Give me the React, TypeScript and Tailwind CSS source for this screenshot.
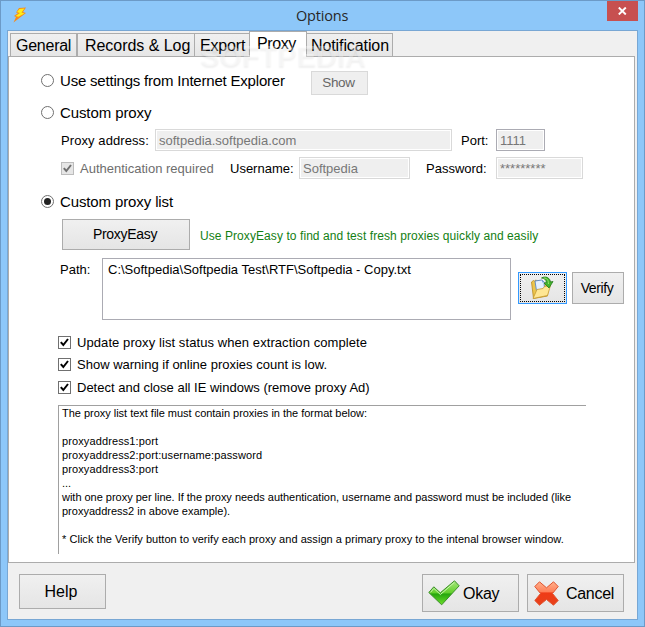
import type { ReactNode } from "react";

function Radio({ checked = false }: { checked?: boolean }) {
  return (
    <span className="flex size-[13px] shrink-0 items-center justify-center rounded-full border border-[#707070] bg-white">
      {checked && <span className="size-[7px] rounded-full bg-[#212121]" />}
    </span>
  );
}

function Check({ disabled = false }: { disabled?: boolean }) {
  return (
    <span
      className={
        "flex size-[13px] shrink-0 items-center justify-center border " +
        (disabled ? "border-[#bcbcbc] bg-[#e6e6e6] text-[#707070]" : "border-[#707070] bg-white text-black")
      }
    >
      <svg width="11" height="11" viewBox="0 0 11 11" fill="none" stroke="currentColor" strokeWidth="2">
        <path d="M1.8 5.2 4.3 8 9 2" />
      </svg>
    </span>
  );
}

function Field({ className, children }: { className: string; children: ReactNode }) {
  return (
    <div className={"h-[22px] shrink-0 border bg-[#efefef] pl-[3px] text-[13px] leading-[22px] whitespace-nowrap text-[#777] shadow-[inset_0_0_0_1px_#fff] " + className}>
      {children}
    </div>
  );
}

const button = "flex shrink-0 items-center border border-[#acacac] bg-linear-to-b from-[#f0f0f0] to-[#e5e5e5] whitespace-nowrap ";
const tab = "h-[23px] shrink-0 border border-b-0 border-[#acacac] bg-linear-to-b from-[#f0f0f0] to-[#e6e6e6] leading-[23px] ";

function Bolt() {
  return (
    <svg width="16" height="16" viewBox="0 0 16 16">
      <path d="M7 1 14 .5 11 5l3 1-6 4.500-6.500 5L4 10 2 9l4-3-2-.5Z" fill="#f58b1c" />
      <path d="M7.500 2 12.500 1.500 9.500 5.500l3 1-6 3.200L3.500 9l4.500-3L5 5Z" fill="#ffee16" />
    </svg>
  );
}

function Folder() {
  return (
    <svg width="24" height="24" viewBox="0 0 24 24">
      <path d="m1.500 6 2-1.500 2 1V4l13 5-1 11-14 2.500Z" fill="#ecc54c" stroke="#b88a20" strokeWidth=".8" />
      <path d="m5 5 7-1 2 2 .5 7-8 2Z" fill="#e4f0ff" stroke="#668fc4" />
      <path d="m12 4 2 2-2 .5Z" fill="#78a4dc" />
      <path d="m3 22.500 4-9 6-1 1.500-2 6-1-3 10Z" fill="#ffe794" stroke="#c69a2f" strokeWidth=".8" />
      <path d="M11.500 2C16-.5 20 2 20.500 6l2.500-.5-4 6.500-5-5 2.500-.5C16 3.500 14.500 2.200 11.500 2Z" fill="#42b52d" stroke="#23791b" strokeWidth=".8" />
      <path d="M14 2c3 0 4.500 2 4.500 6" fill="none" stroke="#95e36b" />
    </svg>
  );
}

function GreenTick() {
  return (
    <svg width="32" height="26" viewBox="0 0 32 26">
      <defs>
        <linearGradient id="tick" x2="0" y2="1">
          <stop stopColor="#a7e77d" />
          <stop offset=".5" stopColor="#62cf2b" />
          <stop offset=".55" stopColor="#25a60e" />
          <stop offset="1" stopColor="#6ee02b" />
        </linearGradient>
      </defs>
      <path d="m.8 12.500 5-5.700 6.500 6L26.500.8l4.700 5-17.500 19Z" fill="url(#tick)" stroke="#3c8e2a" />
      <path d="m2.500 12.400 3.400-4 6.500 6.100L26.400 2.400" fill="none" stroke="#c9f5ae" />
    </svg>
  );
}

function RedCross() {
  return (
    <svg width="25" height="25" viewBox="0 0 25 25">
      <defs>
        <linearGradient id="cross" x2="0" y2="1">
          <stop stopColor="#ffb18d" />
          <stop offset=".42" stopColor="#ff8059" />
          <stop offset=".48" stopColor="#ef3b16" />
          <stop offset="1" stopColor="#e8411b" />
        </linearGradient>
      </defs>
      <path d="M5.500.8 12.500 6.800 19.500.8l4.700 4.700-5.700 7 5.700 7-4.700 4.700-7-5.700-7 5.700L.8 19.500l5.700-7-5.700-7Z" fill="url(#cross)" stroke="#df5430" strokeLinejoin="round" />
    </svg>
  );
}

export default function App() {
  return (
    <div className="relative flex h-[627px] w-[645px] flex-col overflow-hidden border border-[#6c9ac7] bg-[#8dc7f9] font-['Liberation_Sans',Arial,sans-serif] text-black">
      <header className="flex h-[29px] shrink-0 items-start pl-[11px]">
        <div className="w-[284px] pt-[6px]"><Bolt /></div>
        <h1 className="w-[311px] pt-[5px] font-['Open_Sans',sans-serif] text-[14.500px] leading-5 tracking-[-0.2px] text-[#282828]">Options</h1>
        <div className="flex h-5 w-[31px] items-center justify-center bg-[#c75050]">
          <svg width="9" height="8" viewBox="0 0 9 8" stroke="#fff" strokeWidth="1.900"><path d="m.8.500 7 7M7.800.500l-7 7" /></svg>
        </div>
      </header>

      <main className="ml-[6px] flex h-[590px] w-[631px] flex-col border border-[#78a7d4] bg-[#f0f0f0]">
        <nav className="flex h-[25px] shrink-0 items-end pl-[2px] text-[16px] whitespace-nowrap">
          <div className={tab + "w-[67px] pl-[5px] tracking-[-0.25px]"}>General</div>
          <div className={tab + "w-[118px] pl-[7px] tracking-[-0.04px]"}>Records &amp; Log</div>
          <div className={tab + "-ml-px w-[56px] pl-[5px] tracking-[-0.15px]"}>Export</div>
          <div className="z-10 -mb-px -ml-px h-[26px] w-[58px] shrink-0 border border-b-0 border-[#acacac] bg-white pl-[7px] leading-[23px] tracking-[-0.4px]">Proxy</div>
          <div className={tab + "-ml-px w-[87px] pl-[4px] tracking-[-0.1px]"}>Notification</div>
        </nav>

        <section className="h-[507px] w-[627px] shrink-0 border border-[#acacac] bg-white">
          <div className="mt-[14px] flex h-6 pl-8">
            <div className="mt-[3px]"><Radio /></div>
            <span className="ml-[6px] w-[251px] text-[15px] leading-5 tracking-[-0.2px]">Use settings from Internet Explorer</span>
            <div className="flex h-6 w-[57px] items-center justify-center border border-[#d9d9d9] bg-[#efefef] pr-[2px] text-[13.500px] tracking-[-0.3px] text-[#666]">Show</div>
          </div>
          <div className="mt-[6px] flex h-6 pl-8">
            <div className="mt-[5px]"><Radio /></div>
            <span className="ml-[6px] text-[15px] leading-6 tracking-[-0.1px]">Custom proxy</span>
          </div>
          <div className="mt-[4px] flex h-[22px] items-center pl-[52px] text-[13px] whitespace-nowrap">
            <span className="w-[94px] pt-[2px] tracking-[0.08px]">Proxy address:</span>
            <Field className="w-[297px] border-[#d9d9d9]">softpedia.softpedia.com</Field>
            <span className="ml-[9px] w-[35px] pt-[2px]">Port:</span>
            <Field className="w-[49px] border-[#ababb3]">1111</Field>
          </div>
          <div className="mt-[6px] flex h-[22px] items-center pl-[52px] text-[13px] whitespace-nowrap">
            <Check disabled />
            <span className="ml-[6px] w-[150px] pt-[2px] text-[#6d6d6d]">Authentication required</span>
            <span className="w-[69px] pt-[2px]">Username:</span>
            <Field className="w-[111px] border-[#d9d9d9]">Softpedia</Field>
            <span className="ml-4 w-[70px] pt-[2px]">Password:</span>
            <Field className="w-[87px] border-[#d9d9d9]">*********</Field>
          </div>
          <div className="mt-[11px] flex h-6 pl-8">
            <div className="mt-[5px]"><Radio checked /></div>
            <span className="ml-[6px] text-[15px] leading-6 tracking-[-0.12px]">Custom proxy list</span>
          </div>
          <div className="mt-[5px] flex h-[31px] items-center pl-[53px]">
            <div className={button + "h-[31px] w-[128px] justify-center pr-[2px] text-[14px] tracking-[-0.3px]"}>ProxyEasy</div>
            <span className="ml-[10px] pt-[3px] text-[12px] tracking-[0.075px] whitespace-nowrap text-[#138013]">Use ProxyEasy to find and test fresh proxies quickly and easily</span>
          </div>
          <div className="mt-[8px] flex h-[62px] pl-[51px] text-[13px]">
            <span className="w-[42px] pt-[2px]">Path:</span>
            <div className="w-[409px] border border-[#ababb3] pt-px pl-[5px]">C:\Softpedia\Softpedia Test\RTF\Softpedia - Copy.txt</div>
            <div className="mt-[14px] ml-[7px] h-8 w-[49px] border border-[#3399ff] bg-linear-to-b from-[#f0f0f0] to-[#e5e5e5] p-px">
              <div className="flex h-full items-center justify-center border border-dotted border-black pr-[2px]"><Folder /></div>
            </div>
            <div className={button + "mt-[14px] ml-[5px] h-8 w-[52px] justify-center pr-[2px] text-[14px] tracking-[-0.4px]"}>Verify</div>
          </div>
          <div className="mt-[11px] flex h-[22px] items-center gap-[6px] pl-[49px] text-[13px]"><Check /><span className="pt-[2px] tracking-[0.08px]">Update proxy list status when extraction complete</span></div>
          <div className="flex h-[22px] items-center gap-[6px] pl-[49px] text-[13px]"><Check /><span className="pt-[2px]">Show warning if online proxies count is low.</span></div>
          <div className="mt-px flex h-[22px] items-center gap-[6px] pl-[49px] text-[13px]"><Check /><span className="pt-[2px]">Detect and close all IE windows (remove proxy Ad)</span></div>
          <div className="mt-[7px] ml-[49px] h-[149px] w-[528px] border-t border-l border-[#a0a0a0] pl-[3px] text-[11px] leading-[14px] whitespace-nowrap">
            <p className="tracking-[-0.02px]">The proxy list text file must contain proxies in the format below:</p>
            <p className="mt-[14px] tracking-[0.11px]">proxyaddress1:port</p>
            <p className="tracking-[0.11px]">proxyaddress2:port:username:password</p>
            <p className="tracking-[0.11px]">proxyaddress3:port</p>
            <p>...</p>
            <p className="tracking-[-0.02px]">with one proxy per line. If the proxy needs authentication, username and password must be included (like</p>
            <p>proxyaddress2 in above example).</p>
            <p className="mt-[14px] tracking-[0.04px]">* Click the Verify button to verify each proxy and assign a primary proxy to the intenal browser window.</p>
          </div>
        </section>

        <footer className="flex pt-[11px] pl-[11px] text-[16px]">
          <div className={button + "h-[35px] w-[87px] justify-center pr-[3px]"}>Help</div>
          <div className={button + "ml-[316px] h-[38px] w-[97px] pl-[5px]"}><GreenTick /><span className="ml-[3px] pt-[2px] tracking-[-0.25px]">Okay</span></div>
          <div className={button + "ml-2 h-[38px] w-[97px] pl-[6px]"}><RedCross /><span className="ml-[7px] pt-[2px] tracking-[-0.3px]">Cancel</span></div>
        </footer>
      </main>

      <div className="pointer-events-none absolute top-[38px] left-[199px] z-20 text-[29px] leading-[34px] font-bold text-white/35 [text-shadow:0_2px_2px_rgba(0,0,0,0.06)]">SOFTPEDIA</div>
    </div>
  );
}
